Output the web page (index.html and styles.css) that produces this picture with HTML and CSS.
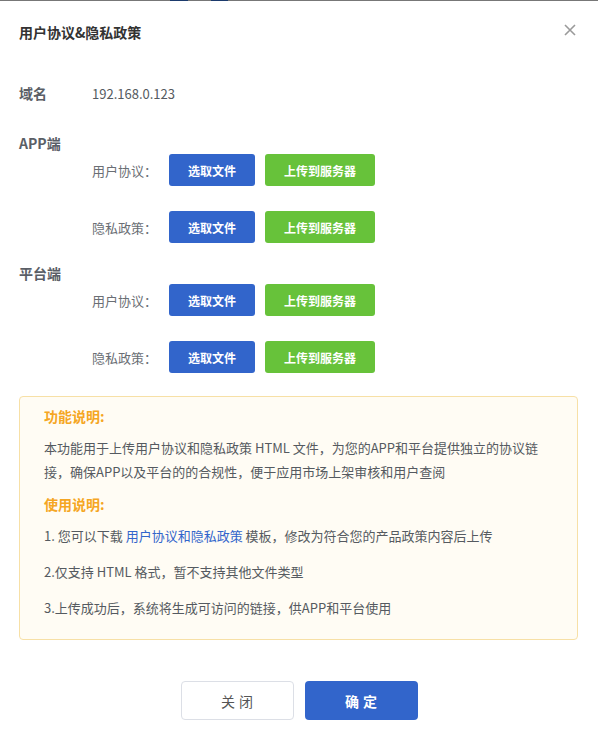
FILE: index.html
```html
<!DOCTYPE html>
<html lang="zh-CN">
<head>
<meta charset="utf-8">
<title>用户协议&amp;隐私政策</title>
<link rel="stylesheet" href="styles.css">
</head>
<body>
<div class="topline"></div>
<div class="dialog">
  <div class="dialog-header">
    <span class="dialog-title">用户协议&amp;隐私政策</span>
    <span class="close" aria-label="关闭">
      <svg width="12" height="12" viewBox="0 0 12 12"><path d="M1 1L11 11M11 1L1 11" stroke="#9a9a9a" stroke-width="1.6" fill="none"/></svg>
    </span>
  </div>

  <div class="domain-row">
    <span class="domain-label">域名</span>
    <span class="domain-value">192.168.0.123</span>
  </div>

  <div class="section">
    <div class="section-title">APP端</div>
    <div class="upload-row">
      <span class="row-label">用户协议：</span>
      <button class="btn btn-blue">选取文件</button>
      <button class="btn btn-green">上传到服务器</button>
    </div>
    <div class="upload-row">
      <span class="row-label">隐私政策：</span>
      <button class="btn btn-blue">选取文件</button>
      <button class="btn btn-green">上传到服务器</button>
    </div>
  </div>

  <div class="section">
    <div class="section-title">平台端</div>
    <div class="upload-row">
      <span class="row-label">用户协议：</span>
      <button class="btn btn-blue">选取文件</button>
      <button class="btn btn-green">上传到服务器</button>
    </div>
    <div class="upload-row">
      <span class="row-label">隐私政策：</span>
      <button class="btn btn-blue">选取文件</button>
      <button class="btn btn-green">上传到服务器</button>
    </div>
  </div>

  <div class="notice">
    <div class="notice-title">功能说明:</div>
    <p class="notice-text">本功能用于上传用户协议和隐私政策 HTML 文件，为您的APP和平台提供独立的协议链接，确保APP以及平台的的合规性，便于应用市场上架审核和用户查阅</p>
    <div class="notice-title second">使用说明:</div>
    <p class="notice-item">1. 您可以下载 <a class="link">用户协议和隐私政策</a> 模板，修改为符合您的产品政策内容后上传</p>
    <p class="notice-item">2.仅支持 HTML 格式，暂不支持其他文件类型</p>
    <p class="notice-item">3.上传成功后，系统将生成可访问的链接，供APP和平台使用</p>
  </div>

  <div class="footer">
    <button class="fbtn fbtn-cancel">关闭</button>
    <button class="fbtn fbtn-ok">确定</button>
  </div>
</div>
</body>
</html>
```

FILE: styles.css
```css
* { box-sizing: border-box; }
html, body {
  margin: 0;
  padding: 0;
  background: #ffffff;
}
body {
  font-family: "Noto Sans CJK SC", "Noto Sans", sans-serif;
  color: #555a60;
  width: 598px;
  height: 740px;
  overflow: hidden;
}
.topline {
  height: 1px;
  background: linear-gradient(to right, #777 0 170px, #1b3a6c 170px 188px, #777 188px 211px, #1b3a6c 211px 228px, #777 228px);
}
.dialog {
  display: flex;
  flex-direction: column;
}
.dialog-header {
  display: flex;
  justify-content: space-between;
  align-items: center;
  padding: 21px 22px 0 19px;
  height: 41px;
}
.dialog-title {
  font-size: 14px;
  font-weight: bold;
  color: #333;
  line-height: 20px;
}
.close {
  display: flex;
  width: 12px;
  height: 12px;
  margin-top: -4px;
}
.domain-row {
  display: flex;
  align-items: center;
  margin-top: 41px;
  padding-left: 19px;
  height: 20px;
}
.domain-label {
  width: 73px;
  font-size: 14px;
  font-weight: bold;
  color: #5a5e66;
}
.domain-value {
  font-size: 13px;
  color: #555a60;
}
.section {
  margin-top: 30px;
  display: flex;
  flex-direction: column;
}
.section + .section {
  margin-top: 20px;
}
.section-title {
  padding-left: 19px;
  font-size: 14px;
  font-weight: bold;
  color: #5a5e66;
  line-height: 20px;
  height: 20px;
  margin-bottom: 1px;
}
.upload-row {
  display: flex;
  align-items: center;
  gap: 10px;
  padding-left: 92px;
  height: 32px;
}
.upload-row + .upload-row {
  margin-top: 25px;
}
.row-label {
  width: 67px;
  font-size: 13px;
  color: #6a6e74;
}
.btn {
  height: 32px;
  border: none;
  border-radius: 3px;
  font-family: inherit;
  font-size: 12px;
  font-weight: bold;
  color: #fff;
  padding: 0;
}
.btn-blue {
  width: 86px;
  background: #3265cb;
}
.btn-green {
  width: 110px;
  background: #67c23a;
}
.notice {
  margin: 23px 20px 0 19px;
  height: 244px;
  border: 1px solid #f7e0a6;
  border-radius: 4px;
  background: #fffcf4;
  padding: 9px 36px 0 24px;
}
.notice-title {
  font-size: 14px;
  font-weight: bold;
  color: #f5a623;
  line-height: 20px;
}
.notice-title.second {
  margin-top: 10px;
}
.notice-text {
  margin: 10px 0 0;
  font-size: 13px;
  line-height: 24px;
  color: #555a60;
}
.notice-item {
  margin: 12px 0 0;
  font-size: 13px;
  line-height: 24px;
  color: #555a60;
}
.notice-title.second + .notice-item {
  margin-top: 10px;
}
.link {
  color: #3265cb;
}
.footer {
  display: flex;
  justify-content: center;
  gap: 11px;
  margin-top: 41px;
}
.fbtn {
  width: 113px;
  height: 39px;
  border-radius: 4px;
  font-family: inherit;
  font-size: 14px;
  letter-spacing: 4px;
  text-indent: 4px;
  padding: 0;
}
.fbtn-cancel {
  background: #fff;
  border: 1px solid #dcdfe6;
  color: #555;
}
.fbtn-ok {
  background: #3265cb;
  border: none;
  color: #fff;
  font-weight: bold;
}
```
